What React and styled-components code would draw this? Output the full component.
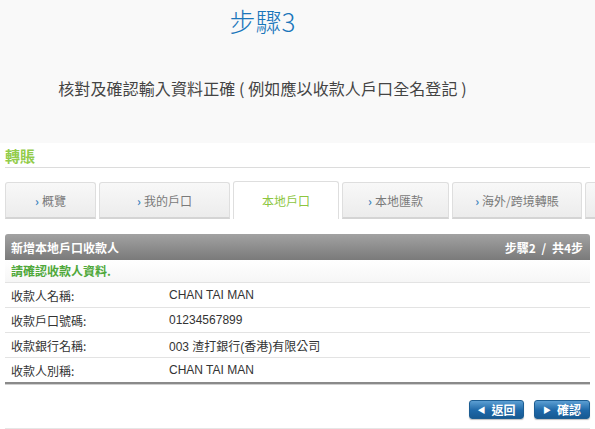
import React from "react";
import styled, { createGlobalStyle } from "styled-components";

const GlobalStyle = createGlobalStyle`
  html, body {
    margin: 0;
    padding: 0;
    background: #ffffff;
    font-family: "Liberation Sans", Arial, "Noto Sans CJK TC", sans-serif;
    overflow: hidden;
  }
`;

const Page = styled.div`
  width: 595px;
  height: 429px;
  overflow: hidden;
  background: #ffffff;
`;

const Intro = styled.div`
  height: 143px;
  background: #f9f9f9;
  padding: 4px 70px 0 0;
  box-sizing: border-box;
  text-align: center;
`;

const StepTitle = styled.h1`
  margin: 0;
  font-size: 26px;
  line-height: 34px;
  font-weight: 300;
  color: #1a76bb;
  font-family: "Noto Sans CJK TC", "Liberation Sans", sans-serif;
`;

const StepHint = styled.p`
  margin: 39px 0 0;
  font-size: 16px;
  line-height: 22px;
  color: #444444;
  letter-spacing: 0.1px;
  font-family: "Noto Sans CJK TC", sans-serif;
`;

const Card = styled.div`
  padding: 0 5px;
`;

const SectionTitle = styled.div`
  height: 24px;
  line-height: 25px;
  border-bottom: 1px solid #dcdcdc;
  color: #92cc4a;
  font-size: 15px;
  font-weight: bold;
  font-family: "Noto Sans CJK TC", sans-serif;
`;

const Tabs = styled.div`
  margin-top: 13px;
  height: 38px;
  display: flex;
  align-items: flex-end;
  gap: 3px;
  width: 620px;
`;

const Tab = styled.div`
  flex: 0 0 ${({ w }) => w}px;
  box-sizing: border-box;
  height: ${({ active }) => (active ? 38 : 37)}px;
  display: flex;
  align-items: center;
  justify-content: center;
  border: 1px solid #dedede;
  border-bottom: ${({ active }) => (active ? "none" : "2px solid #d4d4d4")};
  border-radius: 3px 3px 0 0;
  background: ${({ active }) =>
    active ? "#ffffff" : "linear-gradient(#f8f8f8, #ececec)"};
  color: ${({ active }) => (active ? "#8dc63f" : "#7a7a7a")};
  font-size: 12px;
  font-family: "Noto Sans CJK TC", sans-serif;
`;

const Chevron = styled.span`
  color: #3f86c0;
  margin-right: 3px;
  font-weight: bold;
`;

const Panel = styled.div`
  margin-top: 15px;
`;

const PanelHead = styled.div`
  height: 26px;
  display: flex;
  align-items: center;
  justify-content: space-between;
  padding: 0 7px 0 6px;
  border-radius: 3px 3px 0 0;
  background: linear-gradient(#a2a2a2, #7a7a7a);
  color: #ffffff;
  font-size: 12px;
  font-weight: bold;
  font-family: "Noto Sans CJK TC", sans-serif;
  word-spacing: 3px;
`;

const Notice = styled.div`
  height: 22px;
  line-height: 22px;
  padding-left: 6px;
  border-bottom: 1px solid #e3e3e3;
  background: linear-gradient(#ffffff, #f6f6f6);
  color: #4fa83a;
  font-size: 12px;
  font-weight: bold;
  font-family: "Noto Sans CJK TC", sans-serif;
`;

const Row = styled.div`
  height: 24px;
  display: flex;
  align-items: center;
  padding-left: 6px;
  border-bottom: ${({ last }) => (last ? "2px solid #8a8a8a" : "1px solid #e3e3e3")};
  box-shadow: ${({ last }) => (last ? "0 1px 0 #cfcfcf" : "none")};
  font-size: 12px;
  color: #333333;
`;

const Label = styled.span`
  width: 158px;
  font-family: "Noto Sans CJK TC", sans-serif;
`;

const Value = styled.span`
  font-family: "Liberation Sans", Arial, "Noto Sans CJK TC", sans-serif;
`;

const Actions = styled.div`
  margin-top: 16px;
  display: flex;
  justify-content: flex-end;
  gap: 10px;
  padding-bottom: 9px;
  border-bottom: 1px solid #e6e6e6;
`;

const Button = styled.button`
  width: ${({ w }) => w}px;
  height: 19px;
  padding: 0;
  border: 1px solid #1d5e93;
  border-radius: 3px;
  background: linear-gradient(#5c9fd3, #1e68a8 55%, #175a93);
  color: #ffffff;
  font-size: 12px;
  font-weight: bold;
  font-family: "Noto Sans CJK TC", sans-serif;
  display: flex;
  align-items: center;
  justify-content: center;
  gap: 6px;
  box-shadow: 0 1px 1px rgba(0, 0, 0, 0.25);
`;

const Arrow = styled.span`
  font-size: 8px;
`;

const tabs = [
  { label: "概覽", w: 91 },
  { label: "我的戶口", w: 131 },
  { label: "本地戶口", w: 106, active: true },
  { label: "本地匯款", w: 107 },
  { label: "海外/跨境轉賬", w: 130 },
  { label: "", w: 40 },
];

const rows = [
  ["收款人名稱:", "CHAN TAI MAN"],
  ["收款戶口號碼:", "01234567899"],
  ["收款銀行名稱:", "003 渣打銀行(香港)有限公司"],
  ["收款人別稱:", "CHAN TAI MAN"],
];

export default function App() {
  return (
    <Page>
      <GlobalStyle />
      <Intro>
        <StepTitle>步驟3</StepTitle>
        <StepHint>核對及確認輸入資料正確 ( 例如應以收款人戶口全名登記 )</StepHint>
      </Intro>
      <Card>
        <SectionTitle>轉賬</SectionTitle>
        <Tabs>
          {tabs.map((t, i) => (
            <Tab key={i} w={t.w} active={t.active}>
              {!t.active && t.label && <Chevron>›</Chevron>}
              {t.label}
            </Tab>
          ))}
        </Tabs>
        <Panel>
          <PanelHead>
            <span>新增本地戶口收款人</span>
            <span>步驟2 / 共4步</span>
          </PanelHead>
          <Notice>請確認收款人資料.</Notice>
          {rows.map(([k, v], i) => (
            <Row key={k} last={i === rows.length - 1}>
              <Label>{k}</Label>
              <Value>{v}</Value>
            </Row>
          ))}
        </Panel>
        <Actions>
          <Button w={55}>
            <Arrow>◀</Arrow>返回
          </Button>
          <Button w={56}>
            <Arrow>▶</Arrow>確認
          </Button>
        </Actions>
      </Card>
    </Page>
  );
}
